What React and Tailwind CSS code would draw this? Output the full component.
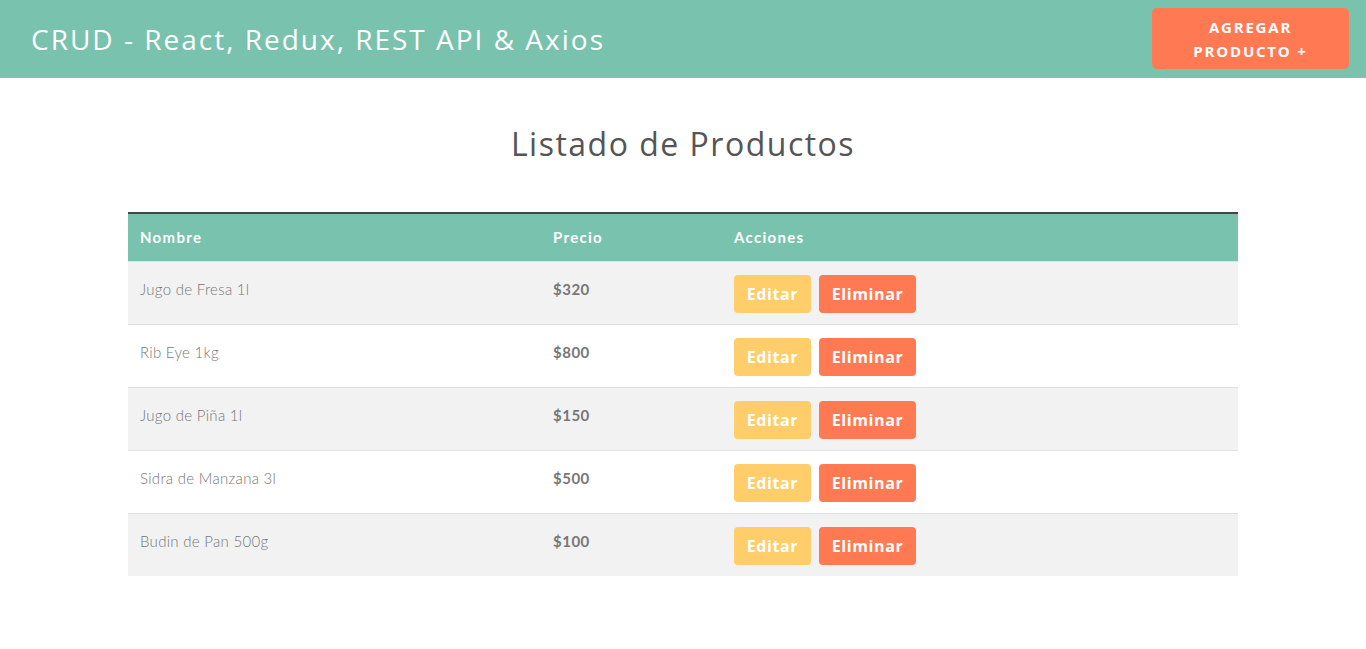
import React from 'react';

const productos = [
  { nombre: 'Jugo de Fresa 1l', precio: 320 },
  { nombre: 'Rib Eye 1kg', precio: 800 },
  { nombre: 'Jugo de Piña 1l', precio: 150 },
  { nombre: 'Sidra de Manzana 3l', precio: 500 },
  { nombre: 'Budin de Pan 500g', precio: 100 },
];

const titleFont = { fontFamily: '"Open Sans", "Liberation Sans", sans-serif' };
const tableFont = { fontFamily: '"Lato", "Open Sans", sans-serif' };

function App() {
  return (
    <div className="min-h-screen bg-white" style={titleFont}>
      {/* Header */}
      <header className="flex justify-between items-start h-[78px] bg-[#79c2ae] pl-[31px] pr-[17px]">
        <h1 className="self-center text-[28px] leading-[36px] text-white tracking-[2px]">
          CRUD - React, Redux, REST API &amp; Axios
        </h1>
        <button className="mt-[8px] w-[197px] h-[61px] rounded-[5px] bg-[#ff7a52] text-white font-bold uppercase text-[15px] leading-[24px] tracking-[1.8px]">
          Agregar
          <br />
          Producto +
        </button>
      </header>

      <main className="w-[1110px] mx-auto">
        <h2 className="text-center text-[32px] leading-[40px] text-[#555] tracking-[1.5px] mt-[46px] mb-[48px]">
          Listado de Productos
        </h2>

        <table className="w-full border-collapse" style={tableFont}>
          <thead>
            <tr className="bg-[#79c2ae] text-white border-t-2 border-[#444] text-left">
              <th className="w-[413px] h-[48px] px-3 font-bold text-[15px] tracking-[1.3px]">Nombre</th>
              <th className="w-[181px] px-3 font-bold text-[15px] tracking-[1.3px]">Precio</th>
              <th className="px-3 font-bold text-[15px] tracking-[1.3px]">Acciones</th>
            </tr>
          </thead>
          <tbody>
            {productos.map((p, i) => (
              <tr
                key={p.nombre}
                className={`${i % 2 === 0 ? 'bg-[#f2f2f2]' : 'bg-white'} border-t border-[#dee2e6] align-top`}
              >
                <td className="h-[63px] px-3 pt-[16px] text-[15px] font-light text-[#777] tracking-[0.3px]">
                  {p.nombre}
                </td>
                <td className="px-3 pt-[16px] text-[15px] font-bold text-[#777] tracking-[0.5px]">${p.precio}</td>
                <td className="px-3 pt-[13px]">
                  <div className="flex gap-2">
                    <button
                      className="w-[77px] h-[38px] rounded-[4px] bg-[#ffcd69] text-white font-bold text-[16px] tracking-[0.6px]"
                      style={titleFont}
                    >
                      Editar
                    </button>
                    <button
                      className="w-[97px] h-[38px] rounded-[4px] bg-[#ff7a52] text-white font-bold text-[16px] tracking-[0.6px]"
                      style={titleFont}
                    >
                      Eliminar
                    </button>
                  </div>
                </td>
              </tr>
            ))}
          </tbody>
        </table>
      </main>
    </div>
  );
}

export default App;
